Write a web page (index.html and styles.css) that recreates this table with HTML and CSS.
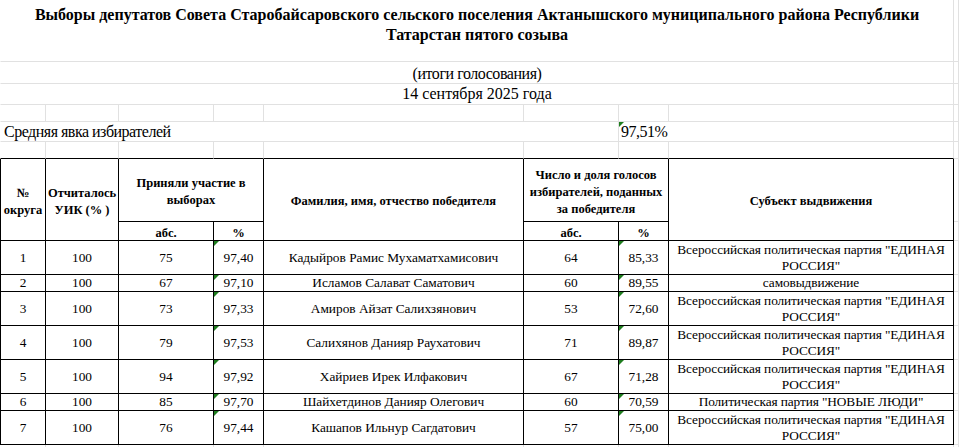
FILE: index.html
```html
<!DOCTYPE html>
<html>
<head>
<meta charset="utf-8">
<title>Выборы депутатов</title>
<link rel="stylesheet" href="styles.css">
</head>
<body class="page">
<div class="sheet">
  <!-- row 1 -->
  <div class="c a span8 title">Выборы депутатов Совета Старобайсаровского сельского поселения Актанышского муниципального района Республики Татарстан пятого созыва</div>
  <div class="c"></div>
  <!-- row 2 -->
  <div class="c a span8 sub narrow">(итоги голосования)</div>
  <div class="c"></div>
  <!-- row 3 -->
  <div class="c a span8 sub">14 сентября 2025 года</div>
  <div class="c"></div>
  <!-- row 4 -->
  <div class="c a"></div><div class="c"></div><div class="c"></div><div class="c"></div><div class="c"></div><div class="c"></div><div class="c"></div><div class="c"></div><div class="c"></div>
  <!-- row 5 -->
  <div class="c a span6 plain">Средняя явка избирателей</div>
  <div class="c span2 plain flag turnout">97,51%</div>
  <div class="c"></div>
  <!-- row 6 -->
  <div class="c a tb"></div><div class="c tb"></div><div class="c tb"></div><div class="c tb"></div><div class="c tb"></div><div class="c tb"></div><div class="c tb"></div><div class="c tb"></div><div class="c"></div>
  <!-- header -->
  <div class="c a t tl rows2 hd">№ округа</div>
  <div class="c t rows2 hd">Отчиталось УИК (% )</div>
  <div class="c t span2 hd">Приняли участие в выборах</div>
  <div class="c t rows2 hd">Фамилия, имя, отчество победителя</div>
  <div class="c t span2 hd">Число и доля голосов избирателей, поданных за победителя</div>
  <div class="c t rows2 hd">Субъект выдвижения</div>
  <div class="c"></div>
  <div class="c t hd">абс.</div>
  <div class="c t hd">%</div>
  <div class="c t hd">абс.</div>
  <div class="c t hd">%</div>
  <div class="c"></div>
  <!-- data rows -->
  <div class="c a t tl bd">1</div><div class="c t bd">100</div><div class="c t bd">75</div><div class="c t bd flag">97,40</div><div class="c t bd">Кадыйров Рамис Мухаматхамисович</div><div class="c t bd">64</div><div class="c t bd flag">85,33</div><div class="c t bd party">Всероссийская политическая партия "ЕДИНАЯ РОССИЯ"</div><div class="c"></div>
  <div class="c a t tl bd">2</div><div class="c t bd">100</div><div class="c t bd">67</div><div class="c t bd flag">97,10</div><div class="c t bd">Исламов Салават Саматович</div><div class="c t bd">60</div><div class="c t bd flag">89,55</div><div class="c t bd party">самовыдвижение</div><div class="c"></div>
  <div class="c a t tl bd">3</div><div class="c t bd">100</div><div class="c t bd">73</div><div class="c t bd flag">97,33</div><div class="c t bd">Амиров Айзат Салихзянович</div><div class="c t bd">53</div><div class="c t bd flag">72,60</div><div class="c t bd party">Всероссийская политическая партия "ЕДИНАЯ РОССИЯ"</div><div class="c"></div>
  <div class="c a t tl bd">4</div><div class="c t bd">100</div><div class="c t bd">79</div><div class="c t bd flag">97,53</div><div class="c t bd">Салихянов Данияр Раухатович</div><div class="c t bd">71</div><div class="c t bd flag">89,87</div><div class="c t bd party">Всероссийская политическая партия "ЕДИНАЯ РОССИЯ"</div><div class="c"></div>
  <div class="c a t tl bd">5</div><div class="c t bd">100</div><div class="c t bd">94</div><div class="c t bd flag">97,92</div><div class="c t bd">Хайриев Ирек Илфакович</div><div class="c t bd">67</div><div class="c t bd flag">71,28</div><div class="c t bd party">Всероссийская политическая партия "ЕДИНАЯ РОССИЯ"</div><div class="c"></div>
  <div class="c a t tl bd">6</div><div class="c t bd">100</div><div class="c t bd">85</div><div class="c t bd flag">97,70</div><div class="c t bd">Шайхетдинов Данияр Олегович</div><div class="c t bd">60</div><div class="c t bd flag">70,59</div><div class="c t bd party">Политическая партия "НОВЫЕ ЛЮДИ"</div><div class="c"></div>
  <div class="c a t tl bd">7</div><div class="c t bd">100</div><div class="c t bd">76</div><div class="c t bd flag">97,44</div><div class="c t bd">Кашапов Ильнур Сагдатович</div><div class="c t bd">57</div><div class="c t bd flag">75,00</div><div class="c t bd party">Всероссийская политическая партия "ЕДИНАЯ РОССИЯ"</div><div class="c"></div>
  <!-- trailing row -->
  <div class="c a"></div><div class="c"></div><div class="c"></div><div class="c"></div><div class="c"></div><div class="c"></div><div class="c"></div><div class="c"></div><div class="c"></div>
</div>
</body>
</html>
```

FILE: styles.css
```css
.page {
  margin: 0;
  padding: 0;
  background: #ffffff;
  overflow: hidden;
}
.sheet {
  display: grid;
  grid-template-columns: 46px 73px 95px 50px 260px 95px 50px 285px 5px;
  grid-template-rows: 62px 22px 21px 17px 20px 17px 63px 19px 34px 17px 34px 34px 34px 17px 34px 10px;
  width: 959px;
  height: 447px;
  overflow: hidden;
  font-family: "Liberation Serif", serif;
  color: #000000;
}
.c {
  box-sizing: border-box;
  border-right: 1px solid #e1e1e1;
  border-bottom: 1px solid #e1e1e1;
  min-width: 0;
  position: relative;
  font-family: "Liberation Serif", serif;
  color: #000000;
}
.a {
  border-left: 1px solid #ffffff;
}
.span8 { grid-column: span 8; }
.span6 { grid-column: span 6; }
.span2 { grid-column: span 2; }
.rows2 { grid-row: span 2; }

.tb { border-bottom-color: #000000; }
.t {
  border-right-color: #000000;
  border-bottom-color: #000000;
  display: flex;
  align-items: center;
  justify-content: center;
  text-align: center;
}
.tl { border-left-color: #000000; }

.title {
  font-weight: bold;
  font-size: 16px;
  line-height: 20px;
  text-align: center;
  padding: 5px 30px 0;
}
.sub {
  font-size: 16px;
  line-height: 20px;
  text-align: center;
  display: flex;
  align-items: center;
  justify-content: center;
}
.narrow {
  letter-spacing: -0.45px;
  padding-top: 2px;
}
.plain {
  font-size: 16px;
  line-height: 19px;
  letter-spacing: -0.5px;
  display: flex;
  align-items: center;
  padding-left: 3px;
  white-space: nowrap;
}
.turnout { padding-left: 2px; }

.hd {
  font-weight: bold;
  font-size: 12.5px;
  line-height: 17px;
  padding: 4px 2px 0;
}
.bd {
  font-size: 13.33px;
  line-height: 16px;
  padding: 0 2px;
}
.party {
  letter-spacing: -0.1px;
}
.flag::before {
  content: "";
  position: absolute;
  top: 0;
  left: 0;
  width: 0;
  height: 0;
  border-top: 5px solid #1e7d1e;
  border-right: 5px solid transparent;
}
```
